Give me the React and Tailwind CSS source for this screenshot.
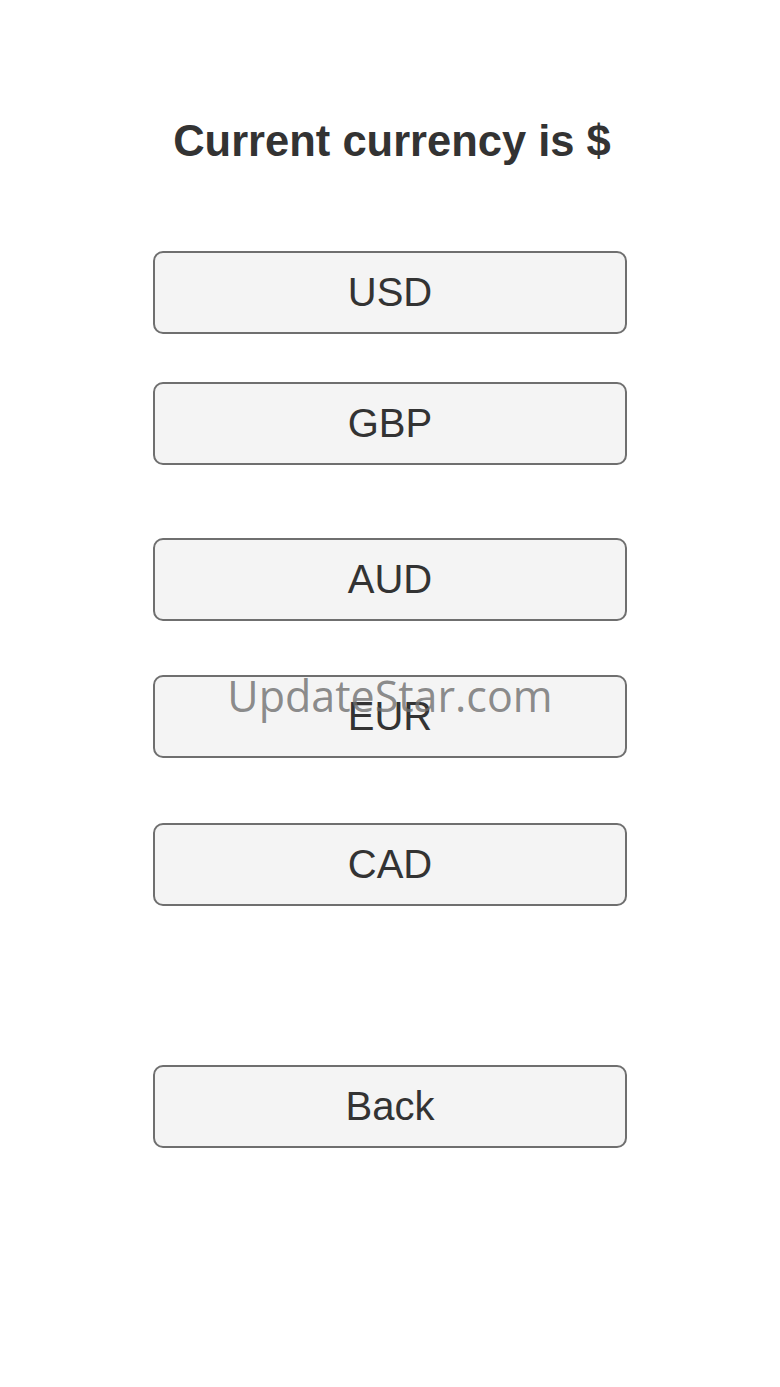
const buttons = [
  { label: 'USD', mt: 'mt-[87px]' },
  { label: 'GBP', mt: 'mt-[48px]' },
  { label: 'AUD', mt: 'mt-[73px]' },
  { label: 'EUR', mt: 'mt-[54px]' },
  { label: 'CAD', mt: 'mt-[65px]' },
  { label: 'Back', mt: 'mt-[159px]' },
];

export default function App() {
  return (
    <div
      className="relative min-h-[1387px] w-full bg-white pt-[120px] flex flex-col items-center"
      style={{ fontFamily: "'Liberation Sans', Arial, sans-serif" }}
    >
      <h1 className="text-[43.5px] leading-none font-bold text-[#333333] ml-[4px]">Current currency is $</h1>

      {buttons.map((b) => (
        <button
          key={b.label}
          className={`${b.mt} w-[474px] h-[83px] rounded-[10px] border-2 border-[#6f6f6f] bg-[#f4f4f4] text-[40px] leading-none text-[#333333] flex items-center justify-center`}
        >
          {b.label}
        </button>
      ))}

      {/* watermark */}
      <div
        className="absolute left-0 right-0 top-[674px] text-center text-[43px] leading-none text-[#6e6e6e]/80 pointer-events-none"
        style={{ fontFamily: "'Open Sans', 'Noto Sans', sans-serif" }}
      >
        UpdateStar.com
      </div>
    </div>
  );
}
